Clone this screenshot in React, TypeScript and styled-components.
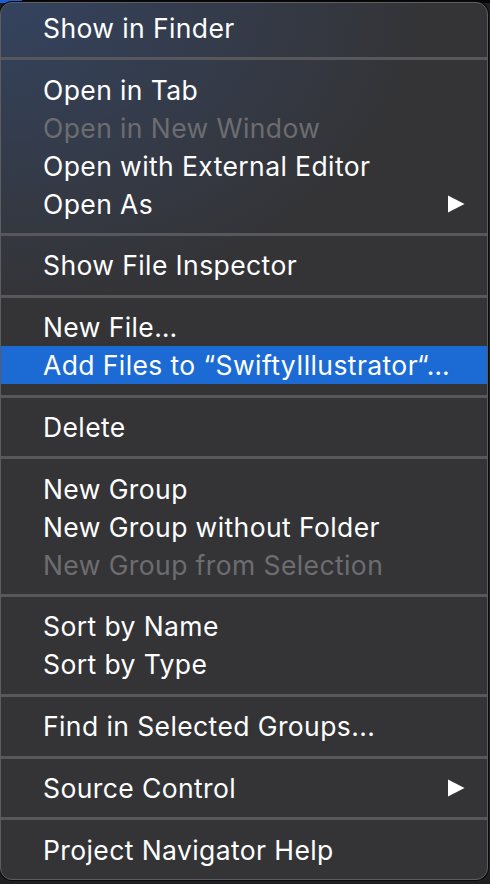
import React from 'react';
import styled, { createGlobalStyle } from 'styled-components';

type Entry =
  | { kind: 'item'; label: string; disabled?: boolean; selected?: boolean; submenu?: boolean }
  | { kind: 'sep' };

const entries: Entry[] = [
  { kind: 'item', label: 'Show in Finder' },
  { kind: 'sep' },
  { kind: 'item', label: 'Open in Tab' },
  { kind: 'item', label: 'Open in New Window', disabled: true },
  { kind: 'item', label: 'Open with External Editor' },
  { kind: 'item', label: 'Open As', submenu: true },
  { kind: 'sep' },
  { kind: 'item', label: 'Show File Inspector' },
  { kind: 'sep' },
  { kind: 'item', label: 'New File…' },
  { kind: 'item', label: 'Add Files to “SwiftyIllustrator“…', selected: true },
  { kind: 'sep' },
  { kind: 'item', label: 'Delete' },
  { kind: 'sep' },
  { kind: 'item', label: 'New Group' },
  { kind: 'item', label: 'New Group without Folder' },
  { kind: 'item', label: 'New Group from Selection', disabled: true },
  { kind: 'sep' },
  { kind: 'item', label: 'Sort by Name' },
  { kind: 'item', label: 'Sort by Type' },
  { kind: 'sep' },
  { kind: 'item', label: 'Find in Selected Groups...' },
  { kind: 'sep' },
  { kind: 'item', label: 'Source Control', submenu: true },
  { kind: 'sep' },
  { kind: 'item', label: 'Project Navigator Help' },
];

const GlobalStyle = createGlobalStyle`
  html, body {
    margin: 0;
    padding: 0;
    background: #1f1f21;
  }
  body {
    font-family: Inter, "Noto Sans", sans-serif;
    -webkit-font-smoothing: antialiased;
  }
`;

const Desktop = styled.div`
  width: 490px;
  height: 884px;
  background: linear-gradient(180deg, #050505 0px, #050505 3px, #1f1f21 3px);
  position: relative;
  overflow: hidden;
`;

const TopBar = styled.div`
  position: absolute;
  left: 0;
  top: 0;
  width: 22px;
  height: 3px;
  background: #1f5fd6;
`;

const Menu = styled.div`
  position: relative;
  margin-top: 2px;
  width: 488px;
  height: 878px;
  box-sizing: border-box;
  padding: 6px 0 10px;
  border-radius: 12px;
  border: 1px solid #5d5d61;
  box-shadow: 0 0 0 1px #0b0b0c;
  background:
    radial-gradient(ellipse 420px 300px at 0% 0%, rgba(52, 72, 108, 0.75), rgba(52, 72, 108, 0) 100%),
    #343437;
  display: flex;
  flex-direction: column;
`;

const Row = styled.div<{ $selected?: boolean; $disabled?: boolean }>`
  height: 38px;
  display: flex;
  align-items: center;
  justify-content: space-between;
  padding: 0 22px 0 42px;
  font-size: 26.5px;
  letter-spacing: 0.4px;
  color: ${(p) => (p.$disabled ? '#6d6d71' : '#ffffff')};
  background: ${(p) => (p.$selected ? '#1c6bd5' : 'transparent')};
  white-space: nowrap;
`;

const Separator = styled.div`
  height: 24px;
  display: flex;
  align-items: center;

  &::after {
    content: '';
    flex: 1;
    height: 3px;
    background: #58585c;
  }
`;

const Arrow = styled.svg`
  width: 18px;
  height: 18px;
  flex: none;
`;

function App() {
  return (
    <>
      <GlobalStyle />
      <Desktop>
        <TopBar />
        <Menu>
          {entries.map((e, i) =>
            e.kind === 'sep' ? (
              <Separator key={i} />
            ) : (
              <Row key={i} $selected={e.selected} $disabled={e.disabled}>
                <span>{e.label}</span>
                {e.submenu ? (
                  <Arrow viewBox="0 0 18 18">
                    <path d="M1 0.5 L17.5 9 L1 17.5 Z" fill="#ffffff" />
                  </Arrow>
                ) : null}
              </Row>
            ),
          )}
        </Menu>
      </Desktop>
    </>
  );
}

export default App;
